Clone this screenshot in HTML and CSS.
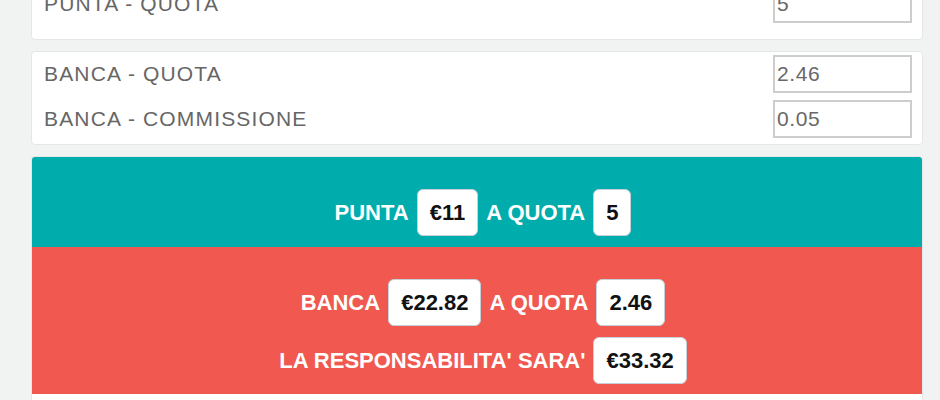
FILE: index.html
```html
<!DOCTYPE html>
<html>
<head>
    <meta charset="utf-8">
    <title>Calcolatore Bancata</title>
    <link rel="stylesheet" href="styles.css">
</head>
<body>
    <div class="page">

        <div class="card card-punta">
            <div class="field">
                <label for="puntaImporto">PUNTA - IMPORTO</label>
                <input type="text" id="puntaImporto" value="11">
            </div>
            <div class="field">
                <label for="puntaQuota">PUNTA - QUOTA</label>
                <input type="text" id="puntaQuota" value="5">
            </div>
        </div>

        <div class="card card-banca">
            <div class="field">
                <label for="bancaQuota">BANCA - QUOTA</label>
                <input type="text" id="bancaQuota" value="2.46">
            </div>
            <div class="field">
                <label for="bancaComm">BANCA - COMMISSIONE</label>
                <input type="text" id="bancaComm" value="0.05">
            </div>
        </div>

        <div class="card result">
            <div class="band band-punta">
                <div class="line">PUNTA <span class="val">€11</span> A QUOTA <span class="val">5</span></div>
            </div>
            <div class="band band-banca">
                <div class="line">BANCA <span class="val">€22.82</span> A QUOTA <span class="val">2.46</span></div>
                <div class="line">LA RESPONSABILITA' SARA' <span class="val">€33.32</span></div>
            </div>
            <div class="result-foot"></div>
        </div>

    </div>
</body>
</html>
```

FILE: styles.css
```css
body,html{
    margin: 0;
    padding: 0;
    background-color: #f1f2f2;
    font-family: "Liberation Sans", Arial, sans-serif;
}
.page{
    width: 892px;
    margin: -64px 0 0 31px;
}
.card{
    background-color: #fff;
    border: 1px solid #e5e7e7;
    border-radius: 4px;
    margin-bottom: 11px;
}
.card-punta{
    padding: 3px 10px 16px 12px;
}
.card-banca{
    padding: 3px 10px 6px 12px;
}
.field{
    display: flex;
    align-items: center;
    justify-content: space-between;
    height: 38px;
}
.field + .field{
    margin-top: 7px;
}
label{
    font-size: 21px;
    letter-spacing: 1.15px;
    color: #666;
}
input{
    box-sizing: border-box;
    width: 139px;
    height: 38px;
    padding: 0 2px;
    border: 2px solid #cdcdcd;
    font-family: "Liberation Sans", Arial, sans-serif;
    font-size: 21px;
    letter-spacing: 0.6px;
    color: #686868;
    background-color: #fff;
}
.result{
    overflow: hidden;
}
.band{
    padding: 32px 0 10px 12px;
    color: #fff;
    font-size: 22px;
    font-weight: bold;
}
.band-punta{
    background-color: #00adac;
    padding-bottom: 11px;
}
.band-banca{
    background-color: #f05850;
}
.line{
    display: flex;
    align-items: center;
    justify-content: center;
    gap: 8px;
}
.line + .line{
    margin-top: 11px;
}
.val{
    background-color: #fff;
    color: #111;
    border: 1px solid #c7d0d8;
    border-radius: 6px;
    padding: 10px 12px;
    line-height: 25px;
}
.result-foot{
    height: 30px;
}
```
